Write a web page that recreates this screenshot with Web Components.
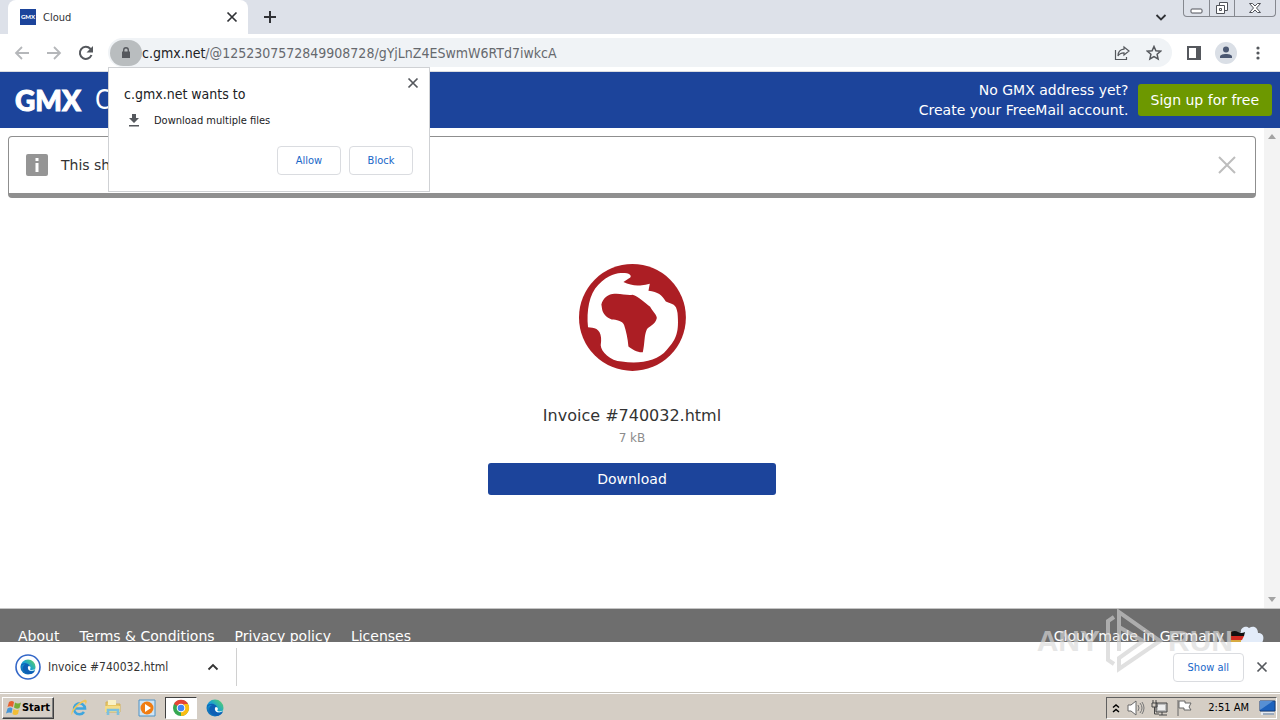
<!DOCTYPE html>
<html lang="en">
<head>
<meta charset="utf-8">
<meta name="viewport" content="width=device-width, initial-scale=1">
<title>Cloud</title>
<style>
    body {
        margin: 0;
        height: 100vh;
        display: flex;
        flex-direction: column;
        overflow: hidden;
        background: #fff;
        color: #202124;
        --ui: 'DejaVu Sans Condensed', 'DejaVu Sans', sans-serif;
        --page: 'DejaVu Sans', Verdana, sans-serif;
        --blue: #1c449b;
        font-family: var(--ui);
        font-size: 11px;
    }
</style>
</head>
<body>
    <tab-strip>Cloud</tab-strip>
    <tool-bar host="c.gmx.net" path="/@1252307572849908728/gYjLnZ4ESwmW6RTd7iwkcA"></tool-bar>
    <site-header></site-header>
    <scroll-pane>
        <info-notice>This sh</info-notice>
        <file-card name="Invoice #740032.html" size="7 kB"></file-card>
    </scroll-pane>
    <site-footer>
        <a slot="link" href="#about">About</a>
        <a slot="link" href="#terms">Terms &amp; Conditions</a>
        <a slot="link" href="#privacy">Privacy policy</a>
        <a slot="link" href="#licenses">Licenses</a>
        <span slot="origin">Cloud made in Germany</span>
    </site-footer>
    <download-shelf>Invoice #740032.html</download-shelf>
    <task-bar></task-bar>
    <permission-bubble host="c.gmx.net">Download multiple files</permission-bubble>
    <play-mark></play-mark>

<script>
const icons = {
    close: [12, '<path d="M1.500 1.500l9 9M10.500 1.500l-9 9" fill="none" stroke="currentColor" stroke-width="1.700"/>'],
    cross: [18, '<path d="M1 1l16 16M17 1L1 17" fill="none" stroke="currentColor" stroke-width="2"/>'],
    plus: [12, '<path d="M6 0v12M0 6h12" stroke="currentColor" stroke-width="2"/>'],
    down: [12, '<path d="M1.500 4L6 8.500 10.500 4" fill="none" stroke="currentColor" stroke-width="1.800"/>'],
    up: [12, '<path d="M1.500 8.500L6 4l4.500 4.500" fill="none" stroke="currentColor" stroke-width="1.800"/>'],
    back: [16, '<path d="M15 8H2M8 2L2 8l6 6" fill="none" stroke="currentColor" stroke-width="1.800"/>'],
    forward: [16, '<path d="M1 8h13M8 2l6 6-6 6" fill="none" stroke="currentColor" stroke-width="1.800"/>'],
    reload: [16, '<path d="M13.500 10A6 6 0 1 1 12.300 3.800L14 5.500" fill="none" stroke="currentColor" stroke-width="2"/><path d="M15 1v6.500H8.500z" fill="currentColor"/>'],
    lock: [14, '<path d="M3 5.500h8V12H3z" fill="currentColor"/><path d="M4.700 6V4a2.300 2.300 0 0 1 4.600 0v2" fill="none" stroke="currentColor" stroke-width="1.400"/>'],
    share: [16, '<path d="M1.500 5v9.500h11V12M10 2l5 4-5 4V7.800C7 7.800 5 9 4 11c0-4 2.500-6.500 6-6.800z" fill="none" stroke="currentColor" stroke-width="1.200"/>'],
    star: [16, '<path d="M8 1.500l1.900 4.300 4.700.4-3.500 3.100 1 4.600L8 11.500l-4.100 2.400 1-4.600-3.500-3.100 4.700-.4z" fill="none" stroke="currentColor" stroke-width="1.500"/>'],
    panel: [16, '<path d="M2 2h12v12H2z" fill="none" stroke="currentColor" stroke-width="2"/><path d="M10 1h5v14h-5z" fill="currentColor"/>'],
    avatar: [22, '<circle cx="11" cy="11" r="11" fill="#dadfe6"/><circle cx="11" cy="7.500" r="3" fill="#4b5872"/><path d="M5 16v-1.500c0-3.500 12-3.500 12 0V16z" fill="#4b5872"/>'],
    menu: [16, '<g fill="currentColor"><circle cx="8" cy="3" r="1.600"/><circle cx="8" cy="8" r="1.600"/><circle cx="8" cy="13" r="1.600"/></g>'],
    download: [14, '<path d="M5 1h4v4h3L7 10 2 5h3zM2 12h10v1.500H2z" fill="currentColor"/>'],
    info: [22, '<rect width="22" height="22" rx="2" fill="#959595"/><path d="M9.500 4h3v3h-3zM9.500 9h3v9h-3z" fill="#fff"/>'],
    globe: [107, `<g transform="scale(.334) translate(-57 -43)">
        <circle cx="217" cy="203" r="160" fill="#ac1e24"/>
        <path fill="#fff" d="M190 70C212 68 217 82 207 86L190 97C207 105 225 109 240 107Q258 105 269 102L265 123C294 126 305 136 317 155C337 164 348 160 352 190C357 245 350 268 320 300C292 336 235 342 185 335C150 333 123 305 122 286C128 252 115 235 97 234L84 232C79 184 87 133 115 105C145 74 170 70 190 70z"/>
        <path fill="#ac1e24" d="M124 164C128 145 147 131 165 132C184 131 204 138 217 135C235 140 255 160 270 171C276 184 290 194 290 205C286 225 266 230 260 239C252 255 254 282 248 307C235 309 216 299 205 290C203 265 198 245 192 226C187 212 168 210 155 209C137 203 127 188 126 177z"/></g>`],
    edge: [18, `<defs><linearGradient id="a" x1="0" y1="1" x2="1" y2="0"><stop offset="0" stop-color="#0b55a4"/><stop offset=".5" stop-color="#169fd9"/><stop offset="1" stop-color="#62d957"/></linearGradient></defs>
        <circle cx="9" cy="9" r="8.500" fill="url(#a)"/><path d="M1 7C4 3 11 5 11 9c0 2-2 2-1 3.500 2 2 5 1 7 0-2 5-8 6-12 2-3-3-2-7 1-8.500C3 6 1 7 1 9z" fill="#0d5fb5"/><path d="M9.500 8c2 0 3 1.500 2 3-1 1.500 2 2 5.500.5-1.500 2-6 2.500-7.500.5Q8 10 9.500 8z" fill="#fff"/>`],
    ringedEdge: [26, `<defs><linearGradient id="b" x1="0" y1="1" x2="1" y2="0"><stop offset="0" stop-color="#0b55a4"/><stop offset=".5" stop-color="#169fd9"/><stop offset="1" stop-color="#62d957"/></linearGradient></defs>
        <circle cx="13" cy="13" r="12" fill="#fff" stroke="#3367c8" stroke-width="1.600"/><g transform="translate(5 5) scale(.89)"><circle cx="9" cy="9" r="8.500" fill="url(#b)"/><path d="M1 7C4 3 11 5 11 9c0 2-2 2-1 3.500 2 2 5 1 7 0-2 5-8 6-12 2-3-3-2-7 1-8.500C3 6 1 7 1 9z" fill="#0d5fb5"/><path d="M9.500 8c2 0 3 1.500 2 3-1 1.500 2 2 5.500.5-1.500 2-6 2.500-7.500.5Q8 10 9.500 8z" fill="#fff"/></g>`],
    explorer: [18, '<path d="M14 13a5.500 5.500 0 1 1 1-3.500H5" fill="none" stroke="#3fa6de" stroke-width="2.600"/><path d="M2 16C-1 13 8 3 14 1c4-1 3 3 1 5 1-3 0-4-3-2C7 7 2 13 2 16z" fill="#efc65a"/>'],
    folder: [18, '<path d="M2 3h5l1 2h8v8H2z" fill="#e9c862" stroke="#d3b15a"/><path d="M4 1h8v5H4z" fill="#f9f1c6"/><path d="M1 7h15v6H1z" fill="#f5dc86"/><path d="M4 16v-5h10v5" fill="none" stroke="#7cc0de" stroke-width="2.600"/>'],
    player: [18, '<path d="M1 1h16v16H1z" fill="#cfe4f4" stroke="#4e92c4"/><circle cx="9" cy="9" r="6.500" fill="#f07d13"/><path d="M7 5l6 4-6 4z" fill="#fff"/>'],
    chrome: [18, '<circle cx="9" cy="9" r="8" fill="#36a852"/><path d="M9 9L2 5a8 8 0 0 1 14 0z" fill="#e54335"/><path d="M9 9l3.500-4H16A8 8 0 0 1 9 17z" fill="#fbbd12"/><circle cx="9" cy="9" r="4.300" fill="#fff"/><circle cx="9" cy="9" r="3.300" fill="#4285f4"/>'],
    windows: [16, '<path d="M3 2q3-2 5 0L7 7Q4 5.500 1.500 7z" fill="#e7612d"/><path d="M9 2.500q3 2 6 0L13.500 8q-3 1.500-5.500-.5z" fill="#76ad36"/><path d="M1.500 8.500q3-2 5 0L5.500 13Q3 12 0 13.500z" fill="#4696d5"/><path d="M7.500 9q3 2 5.500.5L12 14q-3 2-5.500 0z" fill="#f2be35"/>'],
    tray: [10, '<path d="M2 4.500L5 2l3 2.500M2 9l3-2.500L8 9" fill="none" stroke="#000" stroke-width="1.500"/>'],
    speaker: [18, '<path d="M1 6h3l5-4v14l-5-4H1z" fill="#fff" stroke="#686868"/><path d="M11 6q2 3 0 6M13 4q4 5 0 10M15 3q4 6 0 12" fill="none" stroke="#777"/>'],
    network: [18, '<path d="M5 4h11v9H5z" fill="#bdbdbd" stroke="#444"/><path d="M7 6h7v5H7z" fill="#eee"/><path d="M8 16h8M11 13v3M2 1v3M5 1v3M1 4h5v4H1zM3.500 8v7H8" fill="none" stroke="#444"/>'],
    flag: [18, '<path d="M3 1v16M4 2h6v2h6l-2 4 2 3H9V9H4z" fill="#fff" stroke="#666"/>'],
    monitor: [18, '<path d="M2 2h15v10H2z" fill="#1d62bd" stroke="#153d7a"/><path d="M2 11L15 2H2z" fill="#5790d4"/><path d="M3 13h13v3H3z" fill="#e5eaf1"/><path d="M5 15h11" stroke="#536c8a"/>'],
    cloud: [34, '<path d="M12 27C7 26 8 18 11 16c-1-4 5-7 8-4 5-3 9 0 9 5 5 0 7 4 4 10z" fill="#e3ecf9"/><path d="M1 16q4-2 7 0t7 0l-1 4H1z" fill="#111"/><path d="M1 20h13l-2 4-5 1H1z" fill="#d32a20"/><path d="M1 24h10v4H1z" fill="#d7ab42"/>']
}

class UiIcon extends HTMLElement {
    constructor() {
        super()
        this.attachShadow({ mode: 'open' })
    }

    connectedCallback() {
        const [box, art] = icons[this.getAttribute('name')]
        this.shadowRoot.innerHTML = /*html*/`
            <style>
                :host { display: inline-flex; flex: none; }
                svg { display: block; }
            </style>
            <svg width="${box}" height="${box}" viewBox="0 0 ${box} ${box}" aria-hidden="true">${art}</svg>
        `
    }
}

customElements.define('ui-icon', UiIcon)

// shared reset for everything clickable
const controls = /*css*/`
    button {
        font: inherit;
        color: inherit;
        background: none;
        border: 0;
        margin: 0;
        padding: 0;
        display: flex;
        align-items: center;
        justify-content: center;
        flex: none;
    }

    .outlined {
        box-sizing: border-box;
        height: 29px;
        min-width: 64px;
        padding: 0 14px;
        border: 1px solid #dadce0;
        border-radius: 4px;
        background: #fff;
        color: #1967c8;
    }
`

class TabStrip extends HTMLElement {
    constructor() {
        super()
        this.attachShadow({ mode: 'open' }).innerHTML = /*html*/`
            <style>
                ${controls}
                :host {
                    display: flex;
                    flex: none;
                    height: 34px;
                    padding-left: 8px;
                    background: #dde1e9;
                    color: #303236;
                }
                .tab {
                    box-sizing: border-box;
                    width: 240px;
                    padding: 0 10px 0 12px;
                    display: flex;
                    align-items: center;
                    gap: 7px;
                    background: #fff;
                    border-radius: 8px 8px 0 0;
                }
                .badge {
                    width: 16px;
                    height: 16px;
                    background: var(--blue);
                    color: #fff;
                    font: 900 6px/16px Lato, sans-serif;
                    text-align: center;
                }
                .title { flex: 1; }
                .new { width: 44px; }
                .list { margin-left: auto; width: 44px; }
                .window {
                    display: flex;
                    height: 17px;
                    margin-right: 4px;
                    border: solid #85888f;
                    border-width: 0 1px 1px;
                    border-radius: 0 0 4px 4px;
                    box-sizing: border-box;
                }
                .window button { width: 25px; }
                .window button + button { border-left: 1px solid #85888f; }
                .window button:last-child { width: 41px; }
            </style>
            <div class="tab">
                <span class="badge">GMX</span>
                <span class="title"><slot></slot></span>
                <button aria-label="Close tab"><ui-icon name="close"></ui-icon></button>
            </div>
            <button class="new" aria-label="New tab"><ui-icon name="plus"></ui-icon></button>
            <button class="list" aria-label="Search tabs"><ui-icon name="down"></ui-icon></button>
            <div class="window">
                <button aria-label="Minimize"><svg width="13" height="14"><rect x="1" y="8" width="11" height="4" rx="1" fill="#fff" stroke="#50535a"/></svg></button>
                <button aria-label="Restore"><svg width="14" height="14"><path d="M4.500 1.500h8v8h-8z" fill="#fff" stroke="#50535a"/><path d="M1.500 4.500h8v8h-8zM4.500 7.500h2v2h-2z" fill="#fff" stroke="#50535a"/></svg></button>
                <button aria-label="Close"><svg width="14" height="12"><path d="M1.500 1.500h3L7 4l2.500-2.500h3L8.500 6l4 4.500h-3L7 8l-2.500 2.500h-3l4-4.500z" fill="#fff" stroke="#50535a"/></svg></button>
            </div>
        `
    }
}

customElements.define('tab-strip', TabStrip)

class ToolBar extends HTMLElement {
    constructor() {
        super()
        this.attachShadow({ mode: 'open' })
    }

    connectedCallback() {
        this.shadowRoot.innerHTML = /*html*/`
            <style>
                ${controls}
                :host {
                    box-sizing: border-box;
                    display: flex;
                    flex: none;
                    align-items: center;
                    gap: 4px;
                    height: 38px;
                    padding: 0 8px;
                    border-bottom: 1px solid #dadce0;
                    color: #55585d;
                }
                button { width: 28px; height: 28px; }
                .off { color: #b5b7ba; }
                .omnibox {
                    flex: 1;
                    height: 29px;
                    margin: 0 4px;
                    padding-right: 4px;
                    display: flex;
                    align-items: center;
                    gap: 4px;
                    border-radius: 15px;
                    background: #f0f3f6;
                }
                .omnibox .lock {
                    width: 32px;
                    height: 26px;
                    margin-left: 2px;
                    border-radius: 13px;
                    background: #b9bdbf;
                }
                .url {
                    flex: 1;
                    margin-left: -4px;
                    font-size: 14px;
                    color: #66696e;
                }
                b { font-weight: 400; color: #202124; }
            </style>
            <button class="off" aria-label="Back"><ui-icon name="back"></ui-icon></button>
            <button class="off" aria-label="Forward"><ui-icon name="forward"></ui-icon></button>
            <button aria-label="Reload"><ui-icon name="reload"></ui-icon></button>
            <div class="omnibox">
                <button class="lock" aria-label="Site information"><ui-icon name="lock"></ui-icon></button>
                <span class="url"><b>${this.getAttribute('host')}</b>${this.getAttribute('path')}</span>
                <button aria-label="Share"><ui-icon name="share"></ui-icon></button>
                <button aria-label="Bookmark"><ui-icon name="star"></ui-icon></button>
            </div>
            <button aria-label="Side panel"><ui-icon name="panel"></ui-icon></button>
            <button aria-label="Profile"><ui-icon name="avatar"></ui-icon></button>
            <button aria-label="Menu"><ui-icon name="menu"></ui-icon></button>
        `
    }
}

customElements.define('tool-bar', ToolBar)

class SiteHeader extends HTMLElement {
    constructor() {
        super()
        this.attachShadow({ mode: 'open' }).innerHTML = /*html*/`
            <style>
                ${controls}
                :host {
                    display: flex;
                    flex: none;
                    align-items: center;
                    height: 56px;
                    padding: 0 8px 0 15px;
                    background: var(--blue);
                    color: #fff;
                    font-family: var(--page);
                    font-size: 14px;
                    line-height: 20px;
                }
                .brand {
                    font: 900 28px/32px Lato, sans-serif;
                    -webkit-text-stroke: 1px #fff;
                }
                .product { margin-left: 14px; font: 26px/32px var(--ui); font-weight: 200; }
                p { margin: 0 9px 0 auto; text-align: right; }
                .signup {
                    height: 32px;
                    padding: 0 13px;
                    border-radius: 3px;
                    background: #6d9800;
                }
            </style>
            <span class="brand">GMX</span>
            <span class="product">C</span>
            <p>No GMX address yet?<br>Create your FreeMail account.</p>
            <button class="signup">Sign up for free</button>
        `
    }
}

customElements.define('site-header', SiteHeader)

class ScrollPane extends HTMLElement {
    constructor() {
        super()
        this.attachShadow({ mode: 'open' }).innerHTML = /*html*/`
            <style>
                :host { display: flex; flex: 1; min-height: 0; font-family: var(--page); }
                .content { flex: 1; padding: 8px; }
                .bar {
                    width: 16px;
                    display: flex;
                    flex-direction: column;
                    justify-content: space-between;
                    background: #f3f3f3;
                }
            </style>
            <div class="content"><slot></slot></div>
            <div class="bar">
                <svg width="16" height="16"><path d="M4 11l4-5 4 5z" fill="#a3a3a3"/></svg>
                <svg width="16" height="16"><path d="M4 5l4 5 4-5z" fill="#a3a3a3"/></svg>
            </div>
        `
    }
}

customElements.define('scroll-pane', ScrollPane)

class InfoNotice extends HTMLElement {
    constructor() {
        super()
        this.attachShadow({ mode: 'open' }).innerHTML = /*html*/`
            <style>
                ${controls}
                :host {
                    box-sizing: border-box;
                    display: flex;
                    align-items: center;
                    gap: 13px;
                    height: 62px;
                    padding: 0 19px 0 17px;
                    border: 1px solid #8f8f8f;
                    border-bottom-width: 5px;
                    border-radius: 4px;
                    font-size: 14px;
                    color: #333;
                }
                button { margin-left: auto; color: #bdbdbd; }
            </style>
            <ui-icon name="info"></ui-icon>
            <span><slot></slot></span>
            <button aria-label="Dismiss"><ui-icon name="cross"></ui-icon></button>
        `
    }
}

customElements.define('info-notice', InfoNotice)

class FileCard extends HTMLElement {
    constructor() {
        super()
        this.attachShadow({ mode: 'open' })
    }

    connectedCallback() {
        this.shadowRoot.innerHTML = /*html*/`
            <style>
                ${controls}
                :host {
                    display: flex;
                    flex-direction: column;
                    align-items: center;
                    padding-top: 66px;
                    color: #333;
                }
                .name { margin-top: 33px; font-size: 16px; line-height: 24px; }
                .size { font-size: 12px; line-height: 20px; color: #8c8c8c; }
                button {
                    width: 288px;
                    height: 32px;
                    margin-top: 15px;
                    border-radius: 3px;
                    background: var(--blue);
                    color: #fff;
                    font-size: 14px;
                }
            </style>
            <ui-icon name="globe"></ui-icon>
            <div class="name">${this.getAttribute('name')}</div>
            <div class="size">${this.getAttribute('size')}</div>
            <button>Download</button>
        `
    }
}

customElements.define('file-card', FileCard)

class SiteFooter extends HTMLElement {
    constructor() {
        super()
        this.attachShadow({ mode: 'open' }).innerHTML = /*html*/`
            <style>
                :host {
                    box-sizing: border-box;
                    display: flex;
                    flex: none;
                    gap: 20px;
                    height: 34px;
                    padding: 17px 16px 0 18px;
                    overflow: hidden;
                    border-top: 1px solid #c4c4c4;
                    background: #6e6e6e;
                    color: #fff;
                    font-family: var(--page);
                    font-size: 14px;
                    line-height: 20px;
                }
                ::slotted(a) { color: inherit; text-decoration: none; }
                .origin { display: flex; gap: 6px; margin-left: auto; }
                ui-icon { margin-top: -10px; }
            </style>
            <slot name="link"></slot>
            <span class="origin"><slot name="origin"></slot><ui-icon name="cloud"></ui-icon></span>
        `
    }
}

customElements.define('site-footer', SiteFooter)

class DownloadShelf extends HTMLElement {
    constructor() {
        super()
        this.attachShadow({ mode: 'open' }).innerHTML = /*html*/`
            <style>
                ${controls}
                :host {
                    box-sizing: border-box;
                    display: flex;
                    flex: none;
                    align-items: center;
                    height: 50px;
                    padding: 0 12px 0 15px;
                    background: #fff;
                    color: #55585d;
                }
                .item {
                    box-sizing: border-box;
                    width: 222px;
                    height: 38px;
                    padding-right: 17px;
                    display: flex;
                    align-items: center;
                    gap: 7px;
                    border-right: 1px solid #d0d0d0;
                    font-size: 12px;
                    color: #333;
                }
                .item button { margin-left: auto; }
                .outlined { min-width: 71px; margin: 0 12px 0 auto; }
            </style>
            <div class="item">
                <ui-icon name="ringedEdge"></ui-icon>
                <slot></slot>
                <button aria-label="Options"><ui-icon name="up"></ui-icon></button>
            </div>
            <button class="outlined">Show all</button>
            <button aria-label="Close"><ui-icon name="close"></ui-icon></button>
        `
    }
}

customElements.define('download-shelf', DownloadShelf)

class TaskBar extends HTMLElement {
    constructor() {
        super()
        this.attachShadow({ mode: 'open' }).innerHTML = /*html*/`
            <style>
                ${controls}
                :host {
                    box-sizing: border-box;
                    display: flex;
                    flex: none;
                    align-items: center;
                    height: 28px;
                    padding: 2px 3px 0 2px;
                    border-top: 1px solid #c7c3bb;
                    box-shadow: inset 0 1px #fff;
                    background: #d5cec5;
                    color: #000;
                }
                button { box-sizing: border-box; width: 34px; height: 22px; }
                .start {
                    width: 52px;
                    margin-right: 8px;
                    border: 1px solid;
                    border-color: #fff #404040 #404040 #fff;
                    box-shadow: inset -1px -1px #808080;
                    font-weight: 700;
                }
                .active {
                    width: 32px;
                    margin: 0 1px;
                    border: 1px solid;
                    border-color: #404040 #fff #fff #404040;
                    background: #fff;
                }
                .tray {
                    box-sizing: border-box;
                    height: 22px;
                    margin-left: auto;
                    padding: 0 0 0 4px;
                    display: flex;
                    align-items: center;
                    gap: 6px;
                    border: 1px solid;
                    border-color: #606060 #fff #fff #606060;
                }
                time { margin: 0 3px 0 9px; }
            </style>
            <button class="start"><ui-icon name="windows"></ui-icon>Start</button>
            <button aria-label="Internet Explorer"><ui-icon name="explorer"></ui-icon></button>
            <button aria-label="Explorer"><ui-icon name="folder"></ui-icon></button>
            <button aria-label="Media Player"><ui-icon name="player"></ui-icon></button>
            <button class="active" aria-label="Chrome"><ui-icon name="chrome"></ui-icon></button>
            <button aria-label="Edge"><ui-icon name="edge"></ui-icon></button>
            <div class="tray">
                <ui-icon name="tray"></ui-icon>
                <ui-icon name="speaker"></ui-icon>
                <ui-icon name="network"></ui-icon>
                <ui-icon name="flag"></ui-icon>
                <time>2:51 AM</time>
                <ui-icon name="monitor"></ui-icon>
            </div>
        `
    }
}

customElements.define('task-bar', TaskBar)

// anchored under the lock button, on top of the page
class PermissionBubble extends HTMLElement {
    constructor() {
        super()
        this.attachShadow({ mode: 'open' })
    }

    connectedCallback() {
        this.shadowRoot.innerHTML = /*html*/`
            <style>
                ${controls}
                :host {
                    position: absolute;
                    top: 67px;
                    left: 108px;
                    box-sizing: border-box;
                    width: 322px;
                    padding: 9px 16px 16px 15px;
                    border: 1px solid #cfd1d4;
                    background: #fff;
                    color: #202124;
                }
                .head { display: flex; justify-content: space-between; align-items: flex-start; margin-right: -6px; color: #55585d; }
                h2 { margin: 7px 0 0; font-size: 14px; line-height: 20px; font-weight: 400; color: #202124; }
                .row { display: flex; align-items: center; gap: 13px; height: 20px; margin-top: 6px; padding-left: 3px; }
                .row ui-icon { color: #55585d; }
                .actions { display: flex; justify-content: flex-end; gap: 8px; margin-top: 16px; }
            </style>
            <div class="head">
                <h2>${this.getAttribute('host')} wants to</h2>
                <button aria-label="Close"><ui-icon name="close"></ui-icon></button>
            </div>
            <div class="row"><ui-icon name="download"></ui-icon><slot></slot></div>
            <div class="actions">
                <button class="outlined">Allow</button>
                <button class="outlined">Block</button>
            </div>
        `
    }
}

customElements.define('permission-bubble', PermissionBubble)

// translucent recorder mark over the lower right corner
class PlayMark extends HTMLElement {
    constructor() {
        super()
        this.attachShadow({ mode: 'open' }).innerHTML = /*html*/`
            <style>
                :host {
                    position: absolute;
                    right: 47px;
                    bottom: 46px;
                    display: flex;
                    align-items: center;
                    gap: 4px;
                    color: #d9d9d9;
                    font: 700 30px/40px 'Liberation Sans Narrow', 'Liberation Sans', sans-serif;
                    opacity: .65;
                    pointer-events: none;
                }
            </style>
            <span>ANY</span>
            <svg width="60" height="66" viewBox="0 0 60 66" fill="none" stroke="#d0d0d0" stroke-width="4">
                <path d="M15 24V4l41 29-41 28V50l24-17-24-14"/>
                <path d="M15 24v19M10 9l-6 4v39l6 4"/>
            </svg>
            <span>RUN</span>
        `
    }
}

customElements.define('play-mark', PlayMark)
</script>
</body>
</html>
